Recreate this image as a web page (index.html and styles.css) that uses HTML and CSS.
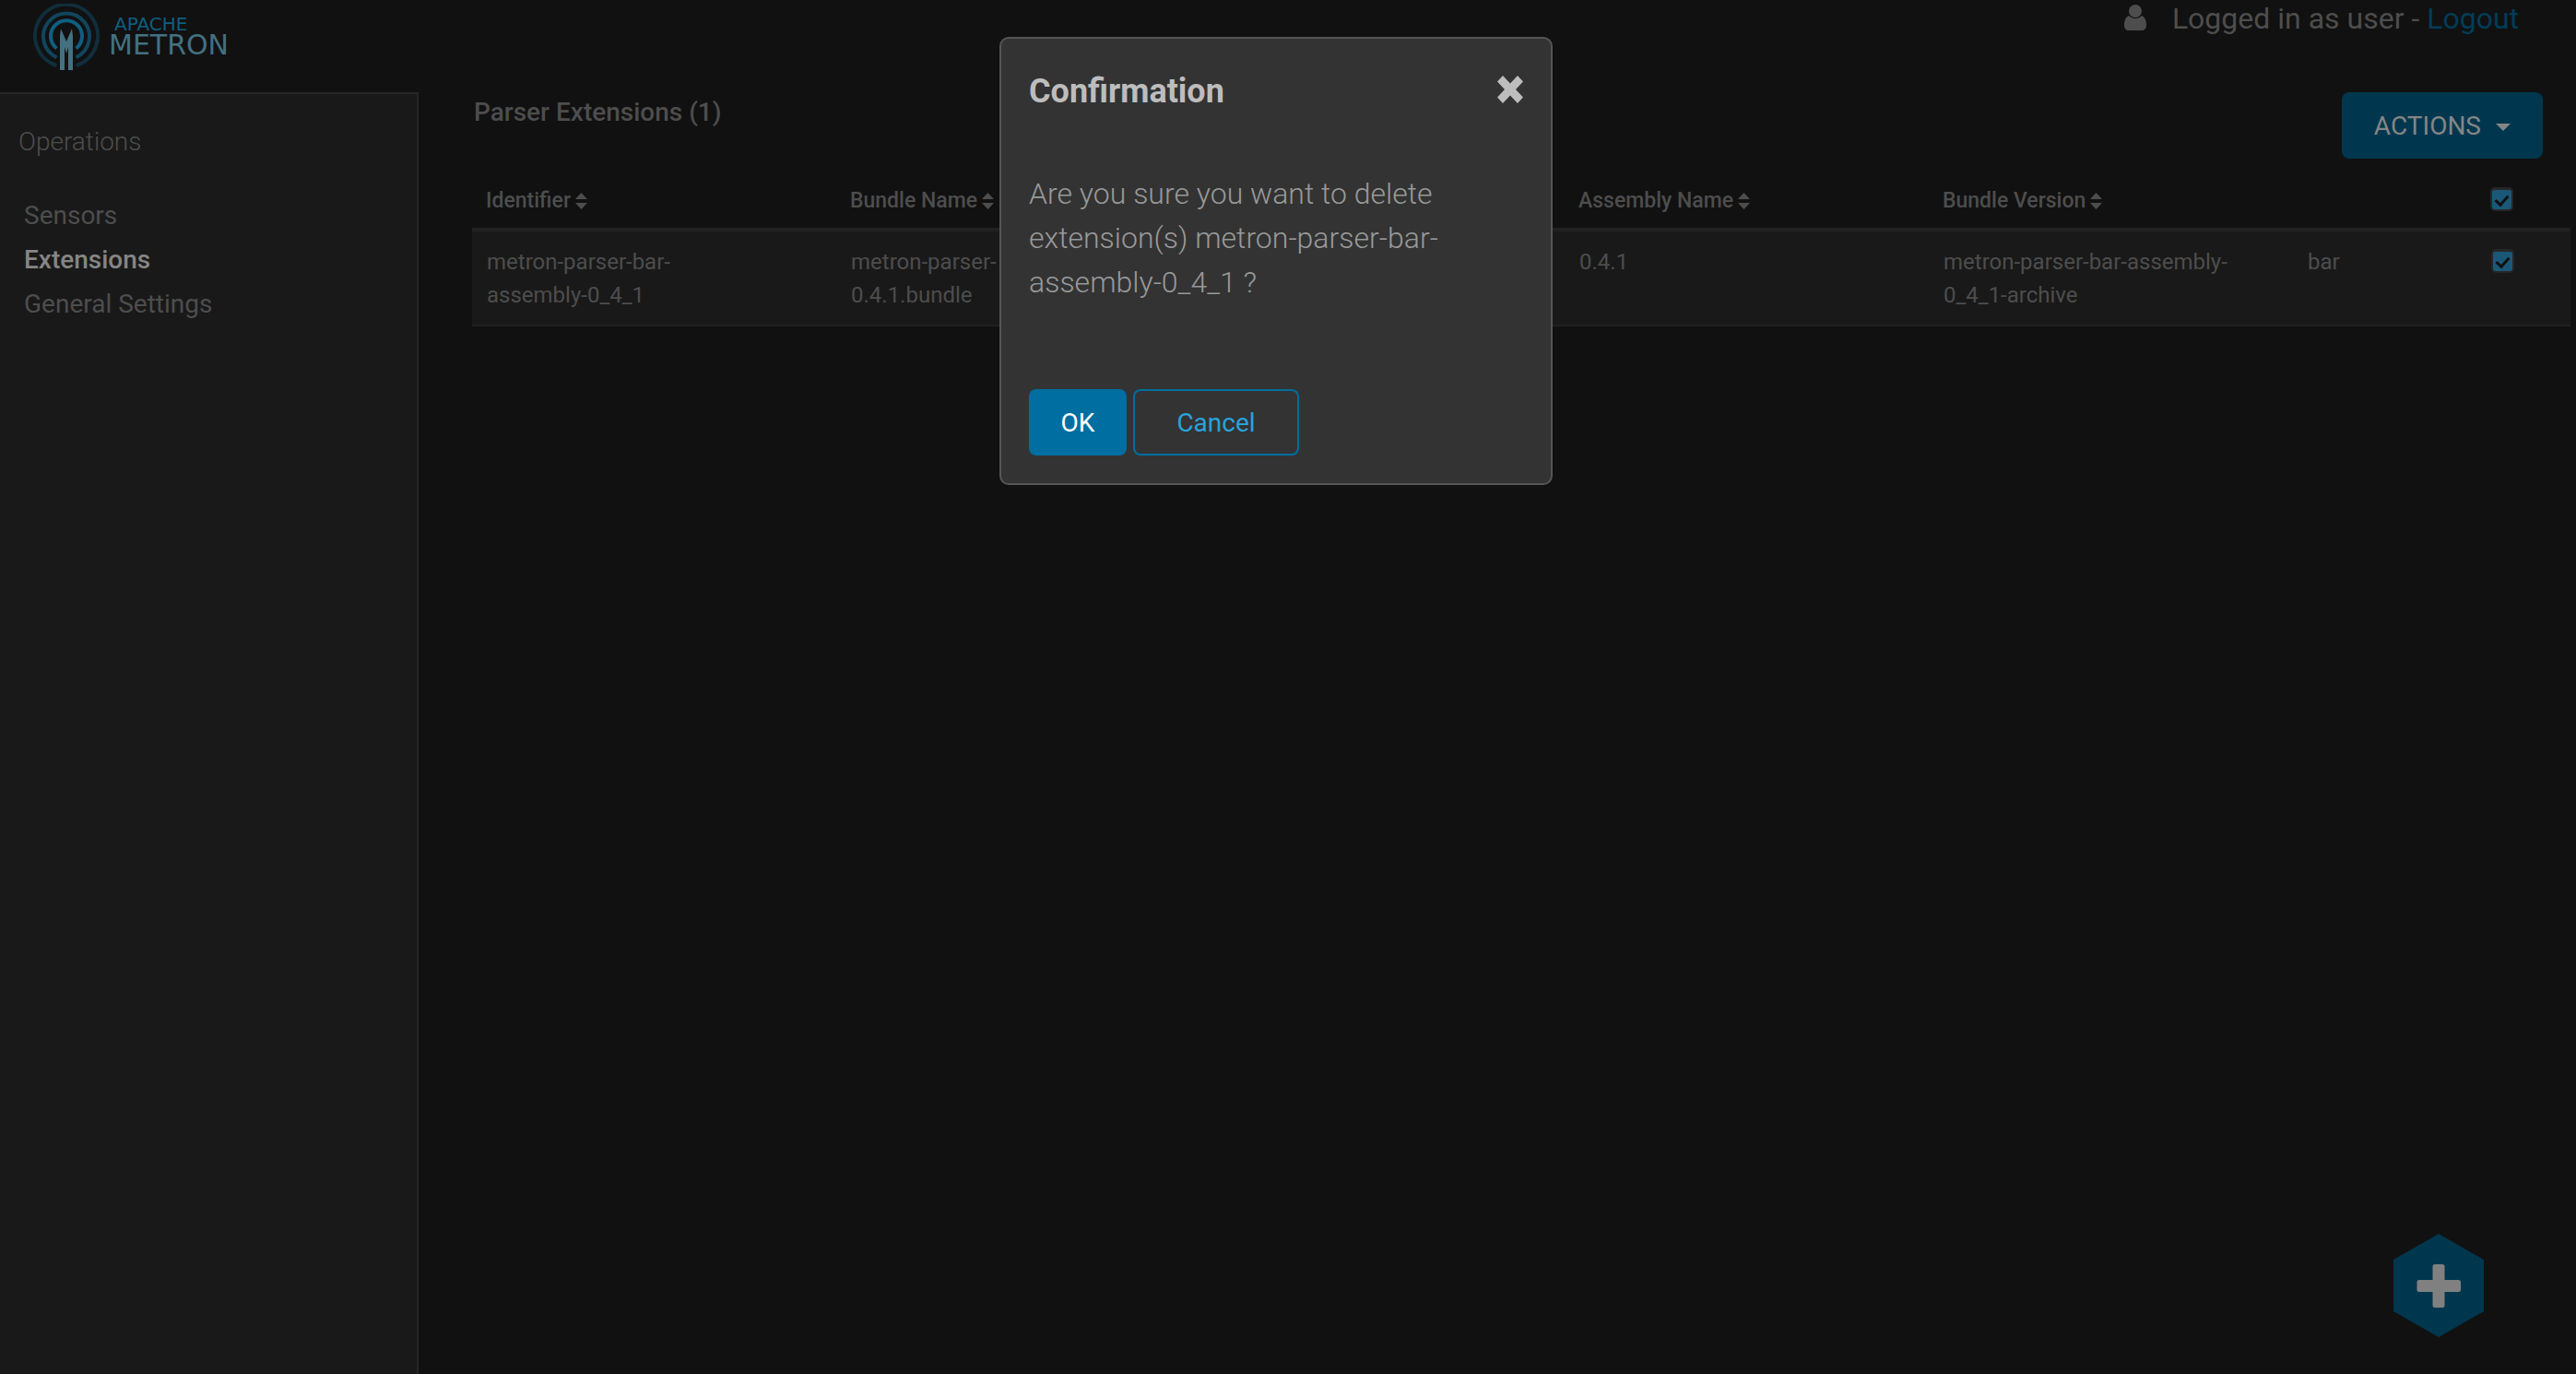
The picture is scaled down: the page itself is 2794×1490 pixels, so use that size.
FILE: index.html
```html
<!DOCTYPE html>
<html lang="en">
<head>
<meta charset="utf-8">
<title>Apache Metron</title>
<link rel="stylesheet" href="styles.css">
</head>
<body>
<header class="topbar">
  <a class="logo" href="#">
    <svg class="logo-mark" viewBox="0 0 72 74" aria-hidden="true">
      <g fill="none" stroke-width="4">
        <path class="ring-outer" d="M25.500 67.200A34 34 0 1 1 46.500 67.200"/>
        <path class="ring-middle" d="M25.500 58.200A25 25 0 1 1 46.500 58.200"/>
        <path class="ring-inner" d="M25.500 48.500A17 17 0 1 1 46.500 48.500"/>
      </g>
      <path class="tower" d="M30 27L36 41L42 27L43 35V72H38V47L36 54L34 47V72H29V35Z"/>
    </svg>
    <span class="logo-text">
      <span class="logo-apache">APACHE</span>
      <span class="logo-metron">METRON</span>
    </span>
  </a>
  <div class="session">
    <svg class="user-icon" viewBox="0 0 24 28" aria-hidden="true"><circle cx="12" cy="7" r="7"/><path d="M5 12C1 14 0 18 0 22.500C0 26 2 28 5 28H19C22 28 24 26 24 22.500C24 18 23 14 19 12C15 16 9 16 5 12Z"/></svg>
    <span>Logged in as user - <a class="logout" href="#">Logout</a></span>
  </div>
</header>
<div class="layout">
  <nav class="sidebar">
    <h2 class="nav-title">Operations</h2>
    <ul class="nav-list">
      <li><a href="#">Sensors</a></li>
      <li><a class="active" href="#">Extensions</a></li>
      <li><a href="#">General Settings</a></li>
    </ul>
  </nav>
  <main class="content">
    <div class="toolbar">
      <h1 class="page-title">Parser Extensions (1)</h1>
      <button class="actions" type="button">ACTIONS <span class="caret"></span></button>
    </div>
    <table class="extensions">
      <colgroup>
        <col class="col-main"><col class="col-main"><col class="col-main"><col class="col-main"><col class="col-main"><col class="col-short"><col class="col-check">
      </colgroup>
      <thead>
        <tr>
          <th>Identifier<svg class="sort" viewBox="0 0 13 18" aria-hidden="true"><path d="M6.500 0L13 7H0ZM0 11H13L6.500 18Z"/></svg></th>
          <th>Bundle Name<svg class="sort" viewBox="0 0 13 18" aria-hidden="true"><path d="M6.500 0L13 7H0ZM0 11H13L6.500 18Z"/></svg></th>
          <th></th>
          <th>Assembly Name<svg class="sort" viewBox="0 0 13 18" aria-hidden="true"><path d="M6.500 0L13 7H0ZM0 11H13L6.500 18Z"/></svg></th>
          <th>Bundle Version<svg class="sort" viewBox="0 0 13 18" aria-hidden="true"><path d="M6.500 0L13 7H0ZM0 11H13L6.500 18Z"/></svg></th>
          <th></th>
          <th><input class="check" type="checkbox" aria-label="Select all" checked></th>
        </tr>
      </thead>
      <tbody>
        <tr>
          <td class="identifier">metron-parser-bar-assembly-0_4_1</td>
          <td>metron-parser-<br>0.4.1.bundle</td>
          <td></td>
          <td>0.4.1</td>
          <td>metron-parser-bar-assembly-0_4_1-archive</td>
          <td>bar</td>
          <td><input class="check" type="checkbox" aria-label="Select extension" checked></td>
        </tr>
      </tbody>
    </table>
  </main>
</div>
<button class="add" type="button" aria-label="Add">
  <svg viewBox="0 0 98 112" aria-hidden="true"><path class="hexagon" d="M49 0L98 28V84L49 112L0 84V28Z"/><path class="plus" d="M45 33H53Q55.500 33 55.500 35.500V50H70.500Q73 50 73 52.500V60.500Q73 63 70.500 63H55.500V77.500Q55.500 80 53 80H45Q42.500 80 42.500 77.500V63H28Q25.500 63 25.500 60.500V52.500Q25.500 50 28 50H42.500V35.500Q42.500 33 45 33Z"/></svg>
</button>
<div class="modal" role="dialog" aria-labelledby="modal-title">
  <div class="modal-head">
    <h2 class="modal-title" id="modal-title">Confirmation</h2>
    <button class="close" type="button" aria-label="Close">
      <svg viewBox="0 0 28 30" aria-hidden="true"><path d="M6 0L14 8.500L22 0L28 6.500L20 15L28 23.500L22 30L14 21.500L6 30L0 23.500L8 15L0 6.500Z"/></svg>
    </button>
  </div>
  <p class="modal-body">Are you sure you want to delete extension(s) metron-parser-bar-assembly-0_4_1 ?</p>
  <div class="modal-actions">
    <button class="ok" type="button">OK</button>
    <button class="cancel" type="button">Cancel</button>
  </div>
</div>
</body>
</html>
```
FILE: styles.css
```css
* { box-sizing: border-box; }

body {
  margin: 0;
  min-height: 100vh;
  display: flex;
  flex-direction: column;
  background: #111;
  color: #4d4d4d;
  font-family: Roboto, sans-serif;
  font-size: 28px;
}

h1, h2, p, ul { margin: 0; }
a { color: inherit; text-decoration: none; }
button { font: inherit; border: 0; padding: 0; background: none; cursor: pointer; }
svg { display: block; }

.topbar {
  display: flex;
  justify-content: space-between;
  align-items: flex-start;
  height: 100px;
  padding: 0 62px 0 36px;
}
.logo { display: flex; gap: 10px; padding-top: 4px; }
.logo-mark { width: 72px; height: 74px; }
.ring-outer { stroke: #112e3d; }
.ring-middle { stroke: #10455d; }
.ring-inner { stroke: #0e5f80; }
.tower { fill: #447080; }
.logo-text {
  display: flex;
  flex-direction: column;
  padding-top: 12px;
  font-family: "DejaVu Sans", sans-serif;
}
.logo-apache { padding-left: 6px; font-size: 20px; line-height: 20px; color: #0e5f80; }
.logo-metron { font-size: 30px; line-height: 26px; color: #447080; }

.session {
  display: flex;
  gap: 28px;
  font-size: 32px;
  line-height: 40px;
}
.user-icon { width: 24px; height: 28px; margin-top: 5px; fill: #4d4d4d; }
.logout { color: #003d58; }

.layout { flex: 1; display: flex; }
.sidebar {
  flex: 0 0 454px;
  padding: 31px 20px;
  background: #191919;
  border-top: 2px solid #262626;
  border-right: 2px solid #262626;
}
.nav-title { font-size: 28px; font-weight: 300; line-height: 42px; }
.nav-list { list-style: none; margin-top: 35px; padding: 0 0 0 6px; line-height: 48px; }
.nav-list .active { color: #858585; font-weight: 500; }

.content { flex: 1; padding: 0 6px 0 58px; }
.toolbar { display: flex; justify-content: space-between; align-items: flex-start; padding-right: 30px; }
.page-title { padding-left: 2px; font-size: 28px; font-weight: 500; line-height: 44px; }
.actions {
  display: flex;
  align-items: center;
  gap: 16px;
  height: 72px;
  padding: 0 35px;
  border-radius: 8px;
  background: #00374f;
  color: #858585;
}
.caret { border: 8px solid transparent; border-top-color: #858585; border-bottom: 0; margin-top: 4px; }

.extensions { width: 100%; table-layout: fixed; border-collapse: separate; border-spacing: 0; }
.col-short { width: 170px; }
.col-check { width: 131px; }
.extensions th {
  height: 79px;
  padding: 0 15px 13px;
  border-bottom: 4px solid #212121;
  vertical-align: bottom;
  text-align: left;
  font-size: 23px;
  font-weight: 500;
  line-height: 32px;
}
.sort { display: inline-block; width: 13px; height: 18px; margin-left: 5px; vertical-align: -2px; fill: #4d4d4d; }
.extensions td {
  padding: 15px 16px 14px;
  border-bottom: 2px solid #212121;
  background: #191919;
  vertical-align: top;
  font-size: 24px;
  line-height: 36px;
}
.extensions .identifier { padding-right: 100px; }
.check {
  appearance: none;
  display: inline-block;
  width: 25px;
  height: 26px;
  margin: 0 0 0 29px;
  border: 2px solid #262626;
  border-top-width: 3px;
  border-radius: 5px;
  vertical-align: -4px;
  background: #1b5878;
}
.check::before {
  content: "";
  display: block;
  width: 6px;
  height: 11px;
  margin: 3px auto 0;
  border: solid #111;
  border-width: 0 3px 3px 0;
  transform: rotate(42deg);
}

.add { position: fixed; right: 100px; bottom: 40px; }
.add svg { width: 98px; height: 112px; }
.hexagon { fill: #00374f; }
.plus { fill: #808080; }

.modal {
  position: fixed;
  top: 40px;
  left: calc(50% - 313px);
  width: 600px;
  padding: 30px;
  border: 2px solid #555;
  border-radius: 10px;
  background: #333;
}
.modal-head { display: flex; justify-content: space-between; align-items: flex-start; height: 52px; }
.modal-title { font-size: 36px; font-weight: 700; line-height: 54px; color: #bdbdbd; }
.close { padding-top: 10px; }
.close svg { width: 28px; height: 30px; fill: #bdbdbd; }
.modal-body { margin-top: 62px; font-size: 32px; font-weight: 300; line-height: 48px; color: #999; }
.modal-actions { display: flex; gap: 7px; margin-top: 92px; }
.ok, .cancel { height: 72px; border-radius: 8px; }
.ok { width: 106px; background: #006ea0; color: #fff; }
.cancel { width: 180px; border: 2px solid #006ea0; color: #29a3dc; }
```
